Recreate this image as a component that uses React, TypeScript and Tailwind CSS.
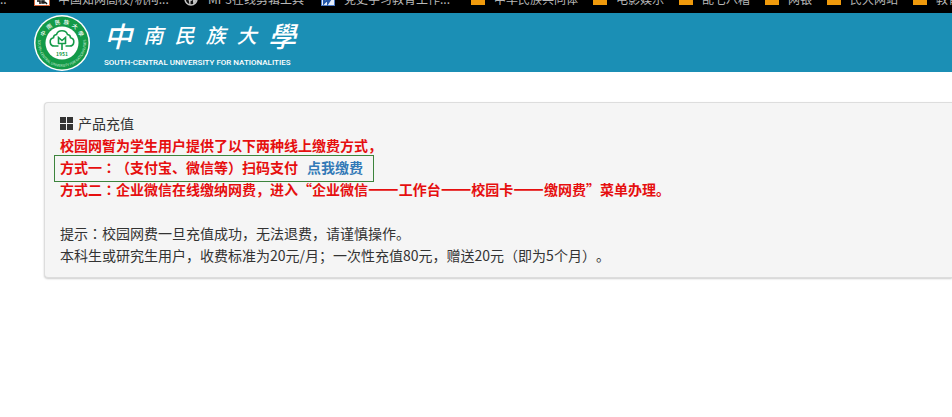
import React from 'react';

type Bookmark = { label: string; icon: 'site' | 'globe' | 'doc' | 'folder' };

const BOOKMARKS: Bookmark[] = [
  { label: '中国知网高校/机构...', icon: 'site' },
  { label: 'MP3在线剪辑工具', icon: 'globe' },
  { label: '党史学习教育工作...', icon: 'doc' },
  { label: '中华民族共同体', icon: 'folder' },
  { label: '电影娱乐', icon: 'folder' },
  { label: '乱七八糟', icon: 'folder' },
  { label: '网银', icon: 'folder' },
  { label: '民大网站', icon: 'folder' },
  { label: '教育', icon: 'folder' },
];

const ITEM_WIDTH: Record<Bookmark['icon'], string> = {
  site: 'w-[136px]',
  globe: 'w-[122px]',
  doc: 'w-[136px]',
  folder: '',
};

const BookmarkIcon: React.FC<{ icon: Bookmark['icon'] }> = ({ icon }) => {
  if (icon === 'folder') {
    return (
      <svg viewBox="0 0 16 14" className="h-3.5 w-4 shrink-0" aria-hidden="true">
        <path d="M1 1h6l1 2h7v10H1z" fill="#f09a0c" />
      </svg>
    );
  }
  if (icon === 'globe') {
    return (
      <svg viewBox="0 0 16 14" className="h-3.5 w-4 shrink-0" aria-hidden="true">
        <circle cx="7" cy="7" r="6" fill="#111" stroke="#c8c8c8" strokeWidth="1.5" />
        <path d="M3 3l4 2 1 3-2 1v4M9 7l3 1-2 4z" fill="#c8c8c8" stroke="#c8c8c8" />
      </svg>
    );
  }
  if (icon === 'doc') {
    return (
      <svg viewBox="0 0 16 14" className="h-3.5 w-4 shrink-0" aria-hidden="true">
        <rect x="1.5" y=".5" width="13" height="13" fill="#e6eefb" stroke="#4a78c4" />
        <path d="M4 4v7l4-4v4l4-6" fill="none" stroke="#2456a8" strokeWidth="2" />
      </svg>
    );
  }
  return (
    <svg viewBox="0 0 16 14" className="h-3.5 w-4 shrink-0" aria-hidden="true">
      <rect x=".5" y=".5" width="15" height="13" fill="#fff" stroke="#d8683c" />
      <path d="M3 3h4v4H3zM9 4h4v3H9zM3 9h3v3M8 9h2v2H8zM11 10l2 2" fill="none" stroke="#111" strokeWidth="1.5" />
    </svg>
  );
};

const Emblem: React.FC = () => (
  <svg viewBox="0 0 56 56" className="h-14 w-14 shrink-0" aria-hidden="true">
    <defs>
      <path id="ring-top" d="M9 28a19 19 0 0 1 38 0" />
      <path id="ring-bottom" d="M4.500 23a24 24 0 1 0 47 0" />
    </defs>
    <circle cx="28" cy="28" r="28" fill="#fff" />
    <circle cx="28" cy="28" r="26.500" fill="#139a48" />
    <circle cx="28" cy="28" r="16.500" fill="#fff" />
    <text fill="#fff" fontSize="5.500" fontWeight="500" textAnchor="middle" xmlSpace="preserve">
      <textPath href="#ring-top" startOffset="50%">
        {'中\u2002南\u2002民\u2002族\u2002大\u2002學'}
      </textPath>
    </text>
    <text fill="#d5f0de" fontSize="3.500" textAnchor="middle">
      <textPath href="#ring-bottom" startOffset="50%">SOUTH-CENTRAL UNIVERSITY FOR NATIONALITIES</textPath>
    </text>
    <g fill="none" stroke="#139a48" strokeWidth="1.600">
      <path d="M24.500 31h-4a4.200 4.200 0 0 1-1-8.300c0-1.700 1.200-3 3-3.200.8-2.600 2.800-3.800 5.500-3.800s4.700 1.200 5.500 3.800c1.800.2 3 1.500 3 3.200a4.200 4.200 0 0 1-1 8.300h-4" />
      <path d="M24.500 29v-6.500l3.500 3 3.500-3V29M24 28.500h8M28 28v7" />
    </g>
    <text x="28" y="41" fill="#139a48" fontSize="5" fontWeight="700" textAnchor="middle">1951</text>
  </svg>
);

const Header: React.FC = () => (
  <header className="flex items-center bg-[#1b8fb5] pb-px pl-[34px] pt-0.5">
    <Emblem />
    <div className="ml-3.5 text-white">
      <h1 className="flex h-9 w-48 items-center justify-between font-medium italic leading-9">
        <span className="text-[28px]">中</span>
        <span className="text-[20px]">南</span>
        <span className="text-[20px]">民</span>
        <span className="text-[20px]">族</span>
        <span className="text-[20px]">大</span>
        <span className="text-[28px]">學</span>
      </h1>
      <p className="mt-1 whitespace-nowrap font-['Roboto'] text-[8px] font-medium leading-3">
        SOUTH-CENTRAL UNIVERSITY FOR NATIONALITIES
      </p>
    </div>
  </header>
);

const Colon: React.FC = () => <span className="font-['Noto_Sans_CJK_TC']">：</span>;
const Dash: React.FC = () => <span className="text-lg leading-none">——</span>;

const App: React.FC = () => {
  return (
    <div className="min-h-screen overflow-hidden bg-white font-['Noto_Sans_CJK_SC',sans-serif] text-sm text-[#333] [text-spacing-trim:space-all]">
      {/* Bookmarks bar */}
      <nav className="flex h-[13px] items-end overflow-hidden bg-black pb-1.5 text-xs leading-4 text-[#b8b8b8]">
        <span className="w-[34px] shrink-0">..</span>
        <div className="flex gap-3.5">
          {BOOKMARKS.map((item) => (
            <a
              key={item.label}
              href="#"
              className={`flex shrink-0 items-center gap-2 whitespace-nowrap ${ITEM_WIDTH[item.icon]}`}
            >
              <BookmarkIcon icon={item.icon} />
              {item.label}
            </a>
          ))}
        </div>
      </nav>

      <Header />

      {/* Recharge notice */}
      <main className="pl-11 pt-[30px]">
        <section className="whitespace-nowrap rounded-l border border-r-0 border-[#ddd] bg-[#f5f5f5] pb-[11px] pl-[15px] pt-[9px] leading-[22px] shadow-[0_1px_2px_rgba(0,0,0,0.2)]">
          <h2 className="flex items-center gap-[5px]">
            <svg viewBox="0 0 13 13" className="h-[13px] w-[13px]" fill="#333" aria-hidden="true">
              <path d="M0 0h6v6H0zM7 0h6v6H7zM0 7h6v6H0zM7 7h6v6H7z" />
            </svg>
            产品充值
          </h2>
          <div className="font-bold text-[#e60f0f]">
            <p>校园网暂为学生用户提供了以下两种线上缴费方式，</p>
            <p className="relative w-fit">
              <span className="pointer-events-none absolute -bottom-1 -left-1.5 -right-[11px] -top-px border border-[#3c843c]"></span>
              方式一<Colon />（支付宝、微信等）扫码支付
              <a href="#" className="ml-[9px] text-[#337ab7]">点我缴费</a>
            </p>
            <p>
              方式二<Colon />企业微信在线缴纳网费，进入“企业微信<Dash />工作台<Dash />校园卡<Dash />缴网费”菜单办理。
            </p>
          </div>
          <p className="mt-[22px]">提示<Colon />校园网费一旦充值成功，无法退费，请谨慎操作。</p>
          <p>本科生或研究生用户，收费标准为20元/月；一次性充值80元，赠送20元（即为5个月）。</p>
        </section>
      </main>
    </div>
  );
};

export default App;
